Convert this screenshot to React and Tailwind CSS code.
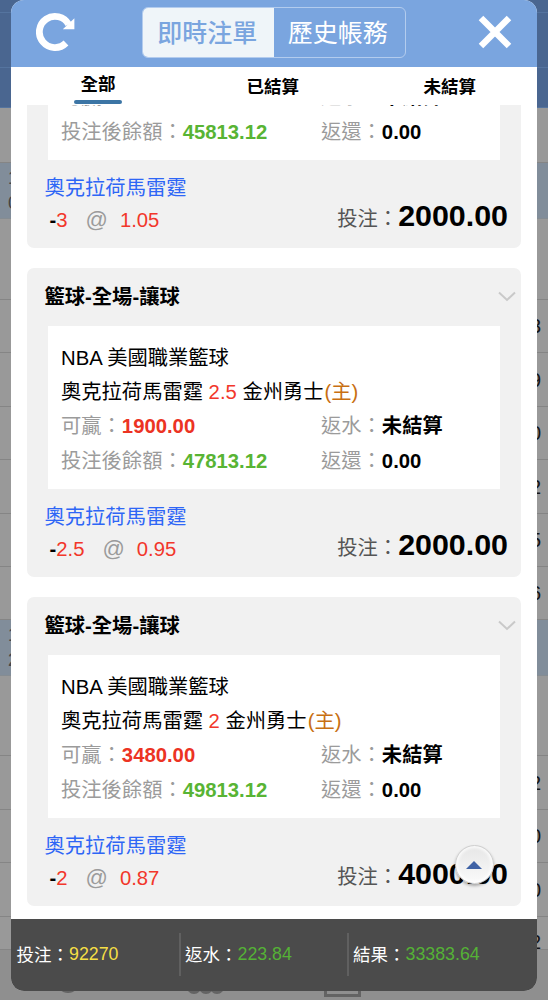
import { useState } from "react";
import clsx from "clsx";

const BETS = [
  { line: "3", odds: "1.05", win: "2100.00", balance: "45813.12", stake: "2000.00" },
  { line: "2.5", odds: "0.95", win: "1900.00", balance: "47813.12", stake: "2000.00" },
  { line: "2", odds: "0.87", win: "3480.00", balance: "49813.12", stake: "4000.00" },
];

const FILTERS = ["全部", "已結算", "未結算"];

// rows of the page behind the dialog
const ROWS = [
  { height: "h-[13px]", tone: "blue" },
  { height: "h-[55px]", tone: "blue" },
  { height: "h-[40px]", tone: "blue" },
  { height: "h-[55px]", tone: "gray" },
  { height: "h-[56px]", tone: "light", left: ["1", "0"] },
  { height: "h-[81px]", tone: "gray" },
  { height: "h-[53px]", tone: "gray", value: "3" },
  { height: "h-[54px]", tone: "gray", value: "9" },
  { height: "h-[53px]", tone: "gray", value: "0" },
  { height: "h-[54px]", tone: "gray", value: "2" },
  { height: "h-[53px]", tone: "gray", value: "5" },
  { height: "h-[53px]", tone: "gray", value: "6" },
  { height: "h-[56px]", tone: "light", left: ["1", "2"] },
  { height: "h-[80px]", tone: "gray" },
  { height: "h-[54px]", tone: "gray", value: "2" },
  { height: "h-[53px]", tone: "gray", value: "0" },
  { height: "h-[54px]", tone: "gray", value: "0" },
  { height: "h-[33px]", tone: "gray", value: "2" },
];

const RefreshIcon = () => (
  <svg width="40" height="40" viewBox="0 0 40 40" fill="none">
    <path
      d="M30 31A15.6 15.6 0 1 1 32.6 12.4"
      stroke="#fff"
      strokeWidth="6.8"
    />
    <path d="M38.4 6.2V17.2H26.8Z" fill="#fff" />
  </svg>
);

const CloseIcon = () => (
  <svg width="34" height="34" viewBox="0 0 34 34" fill="none">
    <path d="M3 3L31 31M31 3L3 31" stroke="#fff" strokeWidth="6.4" />
  </svg>
);

const ChevronIcon = () => (
  <svg width="18" height="11" viewBox="0 0 18 11" fill="none">
    <path d="M1 1.5L9 9L17 1.5" stroke="#c9c9c9" strokeWidth="2" />
  </svg>
);

const Backdrop = () => (
  <div className="flex h-full flex-col bg-[#999999] text-[20px] text-[#161616]">
    {ROWS.map(({ height, tone, value, left }, i) => (
      <div
        key={i}
        className={clsx(
          "flex shrink-0 items-center justify-between overflow-hidden border-b pr-[7px]",
          height,
          tone === "blue" && "border-[#55749f] bg-[#4a6690]",
          tone === "light" && "border-[#858c92] bg-[#818d9a]",
          tone === "gray" && "border-[#858585]"
        )}
      >
        <div className="flex flex-col pl-[8px] text-[18px] leading-[25px] text-[#444444]">
          {left && left.map((text) => <span key={text}>{text}</span>)}
        </div>
        <span className={clsx("leading-none", i === ROWS.length - 1 && "pt-[18px]")}>
          {value}
        </span>
      </div>
    ))}
    <div className="flex-1 bg-[#8f8f8f]">
      <svg width="548" height="50" viewBox="0 0 548 50" fill="none">
        <circle cx="68" cy="32" r="11" fill="#636363" />
        <g stroke="#636363" strokeWidth="3">
          <circle cx="194" cy="36.5" r="6" />
          <circle cx="206" cy="36.5" r="6" />
          <circle cx="217" cy="36.5" r="6" />
          <path d="M325.5 30V45.5H359.5V30" />
        </g>
      </svg>
    </div>
  </div>
);

const Header = () => (
  <header className="flex h-[67px] shrink-0 items-center bg-[#7aa5df] pb-[3px]">
    <button className="ml-[25px]">
      <RefreshIcon />
    </button>
    <div className="ml-[66px] flex h-[51px] w-[264px] overflow-hidden rounded-[6px] border-[1.5px] border-[#b3ccee] text-[25px]">
      <button className="flex-1 bg-[#eff5f9] pt-[3px] pr-[2px] font-medium text-[#7aa5df]">
        即時注單
      </button>
      <button className="flex-1 pt-[3px] pr-[3px] text-white">歷史帳務</button>
    </div>
    <button className="ml-[72px]">
      <CloseIcon />
    </button>
  </header>
);

const BetCard = ({ line, odds, win, balance, stake }) => (
  <article className="h-[309px] shrink-0 rounded-[7px] bg-[#f1f1f1]">
    <div className="flex h-[58px] items-center justify-between pr-[5px] pl-[17.5px]">
      <h2 className="pt-[2px] font-bold">籃球-全場-讓球</h2>
      <ChevronIcon />
    </div>
    <div className="mr-[21px] ml-[21px] h-[163px] bg-white pt-[15px] pl-[13px] leading-[34.4px] whitespace-nowrap">
      <p>NBA 美國職業籃球</p>
      <p>
        奧克拉荷馬雷霆 <span className="text-[#f2372b]">{line}</span> 金州勇士
        <span className="ml-[1px] text-[#c86f12]">(主)</span>
      </p>
      <div className="grid grid-cols-[260px_1fr] text-[#9b9b9b]">
        <p>
          可贏：<b className="text-[#ec3323]">{win}</b>
        </p>
        <p>
          返水：<b className="text-black">未結算</b>
        </p>
        <p>
          投注後餘額：<b className="text-[#58b434]">{balance}</b>
        </p>
        <p>
          返還：<b className="text-black">0.00</b>
        </p>
      </div>
    </div>
    <div className="flex justify-between pt-[12.5px] pr-[13px] pl-[17.5px]">
      <div>
        <p className="leading-[32px] text-[#2e66f6]">奧克拉荷馬雷霆</p>
        <p className="flex pl-[5px] leading-[32px] text-[#f2372b]">
          <b className="text-black">-</b>
          <span>{line}</span>
          <span className="ml-[18px] text-[22px] text-[#9b9b9b]">@</span>
          <span className="ml-[12px]">{odds}</span>
        </p>
      </div>
      <p className="flex items-baseline pt-[23px] leading-[40px] text-[#555555]">
        投注：<b className="text-[30.4px] text-black">{stake}</b>
      </p>
    </div>
  </article>
);

const Total = ({ label, value, className }) => (
  <div className={clsx("flex h-[43px] items-center text-white", className)}>
    {label}：<span className="text-[17.8px]">{value}</span>
  </div>
);

export default function App() {
  const [filter, setFilter] = useState(FILTERS[0]);

  return (
    <div className="relative h-[1000px] w-[548px] overflow-hidden font-['Liberation_Sans','Noto_Sans_CJK_TC',sans-serif]">
      <Backdrop />
      <main className="absolute top-0 left-[11px] flex h-[990.5px] w-[526px] flex-col overflow-hidden rounded-[13px] bg-white text-[20.3px]">
        <Header />
        <nav className="flex h-[38px] shrink-0 justify-between pr-[61px] pl-[63px] text-[17.5px] font-bold">
          {FILTERS.map((name) => (
            <button
              key={name}
              onClick={() => setFilter(name)}
              className={clsx(
                "flex h-[38px] flex-col items-center",
                name === filter ? "w-[48px] pt-[4px]" : "pt-[7px]"
              )}
            >
              <span className="leading-[27px]">{name}</span>
              {name === filter && (
                <span className="mt-[2px] h-[4px] w-[48px] rounded-full bg-[#3c75a5]" />
              )}
            </button>
          ))}
        </nav>
        <section className="flex h-[814px] shrink-0 flex-col overflow-hidden pr-[16px] pl-[16px]">
          <div className="-mt-[166.5px] flex flex-col gap-[20px]">
            {BETS.map((bet) => (
              <BetCard key={bet.balance} {...bet} />
            ))}
          </div>
        </section>
        <footer className="flex flex-1 items-center bg-[#4b4b4b] text-[17.5px]">
          <Total
            label="投注"
            value="92270"
            className="w-[168px] pl-[5.5px] [&>span]:text-[#f5df45]"
          />
          <Total
            label="返水"
            value="223.84"
            className="w-[168px] border-l-2 border-[#606060] pl-[4px] [&>span]:text-[#55b236]"
          />
          <Total
            label="結果"
            value="33383.64"
            className="border-l-2 border-[#606060] pl-[4px] [&>span]:text-[#55b236]"
          />
        </footer>
        <button className="absolute top-[845px] left-[443.5px] flex size-[39px] items-center justify-center rounded-full border border-[#cfcfcf] bg-linear-to-b from-[#e6e6e6] to-[#fafafa] shadow-[0_2px_3px_rgba(0,0,0,0.3),inset_0_0_3px_2px_rgba(255,255,255,0.8)]">
          <svg width="16" height="8" viewBox="0 0 16 8">
            <path d="M8 0L16 8H0Z" fill="#3f62a5" />
          </svg>
        </button>
      </main>
    </div>
  );
}
